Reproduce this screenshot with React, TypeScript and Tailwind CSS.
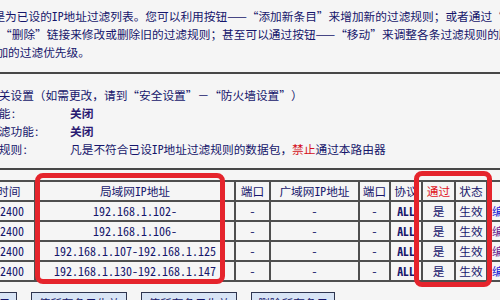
import React from "react";

const FONT = "font-['Noto_Sans_Mono_CJK_SC','Noto_Sans_CJK_SC',sans-serif]";

function T({ s }: { s: string }) {
  const parts: React.ReactNode[] = [];
  let buf = "";
  let k = 0;
  for (const ch of s) {
    if (ch === "“" || ch === "”") {
      if (buf) parts.push(<React.Fragment key={k++}>{buf}</React.Fragment>);
      buf = "";
      parts.push(
        <span
          key={k++}
          className={`inline-block w-[11.7px] ${ch === "“" ? "text-right" : "text-left"}`}
        >
          {ch}
        </span>
      );
    } else {
      buf += ch;
    }
  }
  if (buf) parts.push(<React.Fragment key={k++}>{buf}</React.Fragment>);
  return <>{parts}</>;
}

const cols = [
  "w-[76px]",
  "w-[200px]",
  "w-[35px]",
  "w-[89px]",
  "w-[31px]",
  "w-[32px]",
  "w-[33px]",
  "w-[32px]",
  "w-[100px]",
];

const rows = [
  { ip: "192.168.1.102-", link: "text-[#1c1cd6]" },
  { ip: "192.168.1.106-", link: "text-[#6b1f8f]" },
  { ip: "192.168.1.107-192.168.1.125", link: "text-[#6b1f8f]" },
  { ip: "192.168.1.130-192.168.1.147", link: "text-[#1c1cd6]" },
];

function Cell({ w, children, className = "" }: { w: string; children?: React.ReactNode; className?: string }) {
  return (
    <div
      className={`${w} shrink-0 h-[20px] border-r-2 border-b-2 border-[#4f4f4f] flex items-center justify-center overflow-hidden whitespace-nowrap ${className}`}
    >
      {children}
    </div>
  );
}

export default function App() {
  return (
    <div
      className={`relative w-[500px] h-[300px] overflow-hidden bg-[#f5f5f5] text-[#16166b] text-[11.7px] ${FONT}`}
    >
      {/* intro paragraph */}
      <div className="pt-[7px] leading-[18px] whitespace-nowrap">
        <div className="ml-[-30px]">
          <T s="本页是为已设的IP地址过滤列表。您可以利用按钮——“添加新条目”来增加新的过滤规则；或者通过“编辑”、" />
        </div>
        <div className="ml-[0px]">
          <T s="“删除”链接来修改或删除旧的过滤规则；甚至可以通过按钮——“移动”来调整各条过滤规则的顺序和" />
        </div>
        <div className="ml-[-27px]">新增加的过滤优先级。</div>
      </div>

      <div className="mt-[11px] h-[2px] bg-[#474747]" />

      {/* firewall settings */}
      <div className="mt-[12px] leading-[18px] ml-[-48px] whitespace-nowrap">
        <div>
          <T s="防火墙相关设置（如需更改，请到“安全设置”－“防火墙设置”）" />
        </div>
        <div className="flex">
          <div className="w-[118px]">防火墙功能:</div>
          <div className="font-bold text-[#2a1a72]">关闭</div>
        </div>
        <div className="flex">
          <div className="w-[118px]">IP地址过滤功能:</div>
          <div className="font-bold text-[#2a1a72]">关闭</div>
        </div>
        <div className="flex">
          <div className="w-[118px]">缺省过滤规则:</div>
          <div>
            凡是不符合已设IP地址过滤规则的数据包，<span className="text-[#d40f1a]">禁止</span>通过本路由器
          </div>
        </div>
      </div>

      <div className="mt-[10px] h-[2px] bg-[#474747]" />

      {/* table */}
      <div className="mt-[10px] ml-[-42px] w-[700px] border-t-2 border-l-2 border-[#4f4f4f]">
        <div className="flex">
          <Cell w={cols[0]}>生效时间</Cell>
          <Cell w={cols[1]}>局域网IP地址</Cell>
          <Cell w={cols[2]}>端口</Cell>
          <Cell w={cols[3]}>广域网IP地址</Cell>
          <Cell w={cols[4]}>端口</Cell>
          <Cell w={cols[5]}>协议</Cell>
          <Cell w={cols[6]} className="text-[#e0141e]">通过</Cell>
          <Cell w={cols[7]}>状态</Cell>
          <Cell w={cols[8]}>配置</Cell>
        </div>
        {rows.map((r, i) => (
          <div className="flex" key={i}>
            <Cell w={cols[0]} className="text-[12px]">0000-2400</Cell>
            <Cell w={cols[1]} className="text-[12px]">{r.ip}</Cell>
            <Cell w={cols[2]}>-</Cell>
            <Cell w={cols[3]}>-</Cell>
            <Cell w={cols[4]}>-</Cell>
            <Cell w={cols[5]} className="font-bold">ALL</Cell>
            <Cell w={cols[6]}>是</Cell>
            <Cell w={cols[7]}>生效</Cell>
            <Cell w={cols[8]} className={`!justify-start pl-[4px] ${r.link}`}>
              编辑 删除
            </Cell>
          </div>
        ))}
      </div>

      {/* buttons */}
      <div className="mt-[10px] ml-[-55px] flex gap-[14px] whitespace-nowrap">
        {["添加新条目", "使所有条目生效", "使所有条目失效", "删除所有条目"].map((t) => (
          <div
            key={t}
            className="h-[22px] px-[6px] border border-[#2e3550] bg-[#d8e4f5] flex items-center"
          >
            {t}
          </div>
        ))}
      </div>

      {/* annotation boxes */}
      <div className="absolute left-[35px] top-[173px] w-[190px] h-[111px] border-[5px] border-[#e5242c] rounded-[8px]" />
      <div className="absolute left-[414px] top-[171px] w-[78px] h-[116px] border-[5px] border-[#e5242c] rounded-[8px]" />
    </div>
  );
}
